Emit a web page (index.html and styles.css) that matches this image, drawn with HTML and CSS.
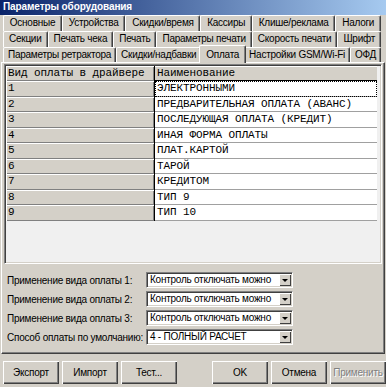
FILE: index.html
```html
<!DOCTYPE html>
<html lang="ru">
<head>
  <meta charset="UTF-8" />
  <title>Параметры оборудования</title>
  <link rel="stylesheet" href="styles.css">
</head>
<body>
  <div class="window">
    <div class="titlebar">Параметры оборудования</div>

    <div class="tabs">
      <div class="tabrow">
        <span class="tab">Основные</span>
        <span class="tab">Устройства</span>
        <span class="tab">Скидки/время</span>
        <span class="tab">Кассиры</span>
        <span class="tab">Клише/реклама</span>
        <span class="tab">Налоги</span>
      </div>
      <div class="tabrow">
        <span class="tab">Секции</span>
        <span class="tab">Печать чека</span>
        <span class="tab">Печать</span>
        <span class="tab">Параметры печати</span>
        <span class="tab">Скорость печати</span>
        <span class="tab">Шрифт</span>
      </div>
      <div class="tabrow last">
        <span class="tab">Параметры ретрактора</span>
        <span class="tab">Скидки/надбавки</span>
        <span class="tab active">Оплата</span>
        <span class="tab">Настройки GSM/Wi-Fi</span>
        <span class="tab">ОФД</span>
      </div>
    </div>

    <div class="panel">
      <div class="grid">
        <div class="row head">
          <div class="c1">Вид оплаты в драйвере</div>
          <div class="c2">Наименование</div>
        </div>
        <div class="row">
          <div class="c1">1</div>
          <div class="c2 focus">ЭЛЕКТРОННЫМИ</div>
        </div>
        <div class="row">
          <div class="c1">2</div>
          <div class="c2">ПРЕДВАРИТЕЛЬНАЯ ОПЛАТА (АВАНС)</div>
        </div>
        <div class="row">
          <div class="c1">3</div>
          <div class="c2">ПОСЛЕДУЮЩАЯ ОПЛАТА (КРЕДИТ)</div>
        </div>
        <div class="row">
          <div class="c1">4</div>
          <div class="c2">ИНАЯ ФОРМА ОПЛАТЫ</div>
        </div>
        <div class="row">
          <div class="c1">5</div>
          <div class="c2">ПЛАТ.КАРТОЙ</div>
        </div>
        <div class="row">
          <div class="c1">6</div>
          <div class="c2">ТАРОЙ</div>
        </div>
        <div class="row">
          <div class="c1">7</div>
          <div class="c2">КРЕДИТОМ</div>
        </div>
        <div class="row">
          <div class="c1">8</div>
          <div class="c2">ТИП 9</div>
        </div>
        <div class="row">
          <div class="c1">9</div>
          <div class="c2">ТИП 10</div>
        </div>
      </div>

      <div class="form">
        <label>Применение вида оплаты 1:</label>
        <div class="combo"><span>Контроль отключать можно</span><i class="drop"></i></div>
        <label>Применение вида оплаты 2:</label>
        <div class="combo"><span>Контроль отключать можно</span><i class="drop"></i></div>
        <label>Применение вида оплаты 3:</label>
        <div class="combo"><span>Контроль отключать можно</span><i class="drop"></i></div>
        <label>Способ оплаты по умолчанию:</label>
        <div class="combo"><span>4 - ПОЛНЫЙ РАСЧЕТ</span><i class="drop"></i></div>
      </div>
    </div>

    <div class="buttons">
      <div class="group">
        <button>Экспорт</button>
        <button>Импорт</button>
        <button>Тест...</button>
      </div>
      <div class="group">
        <button>OK</button>
        <button>Отмена</button>
        <button class="disabled">Применить</button>
      </div>
    </div>
  </div>
</body>
</html>
```

FILE: styles.css
```css
body {
  margin: 0;
  background: #d4d0c8;
  font-family: "Liberation Sans", Arial, sans-serif;
  font-size: 10px;
  letter-spacing: -0.25px;
  color: #000;
}
.window {
  width: 386px;
  height: 387px;
  display: flex;
  flex-direction: column;
  overflow: hidden;
}
.titlebar {
  height: 15px;
  line-height: 14px;
  padding-left: 3px;
  background: linear-gradient(to right, #0a246a, #a6caf0);
  color: #fff;
  font-weight: bold;
  letter-spacing: -0.1px;
}

/* tabs */
.tabs {
  padding: 0 5px 0 3px;
}
.tabrow {
  display: flex;
  height: 16px;
}
.tabrow.last {
  height: 15px;
}
.tab {
  flex: 1 1 auto;
  padding: 0 3px;
  text-align: center;
  white-space: nowrap;
  line-height: 14px;
  border-top: 1px solid #fff;
  border-left: 1px solid #fff;
  border-right: 1px solid #404040;
  border-radius: 2px 2px 0 0;
  box-shadow: inset -1px 0 #808080;
}
.tab.active {
  position: relative;
  z-index: 1;
  margin: -2px -2px -1px;
  padding: 0 5px;
  line-height: 17px;
  background: #d4d0c8;
}

/* page panel */
.panel {
  height: 289px;
  margin: 0 1px;
  border-top: 1px solid #fff;
  border-left: 1px solid #fff;
  border-right: 1px solid #404040;
  border-bottom: 1px solid #404040;
  box-shadow: inset -1px -1px #808080;
  padding: 1px 2px 0 2px;
}

/* payment grid */
.grid {
  height: 197px;
  background: #f0f0f0;
  border-top: 1px solid #808080;
  border-left: 1px solid #808080;
  border-right: 1px solid #fff;
  border-bottom: 1px solid #fff;
  box-shadow: inset 1px 1px #404040, inset -1px -1px #d4d0c8;
  padding: 1px 4px 0 1px;
  font-family: "Liberation Mono", "Courier New", monospace;
  font-size: 11px;
  letter-spacing: -0.1px;
}
.row {
  display: flex;
  height: 15.5px;
  line-height: 15px;
}
.row.head {
  height: 15px;
}
.c1 {
  width: 146px;
  padding-left: 2px;
  background: #d4d0c8;
  border-right: 1px solid #000;
  box-shadow: inset 1px 1px #fff, inset -1px -1px #808080;
}
.c2 {
  flex: 1;
  padding-left: 2px;
  background: #fff;
  border-bottom: 1px solid #a0a0a0;
  white-space: nowrap;
}
.head .c2 {
  background: #d4d0c8;
  border-bottom: 1px solid #000;
  box-shadow: inset 0 1px #fff;
}
.c2.focus {
  outline: 1px dotted #000;
  outline-offset: -1px;
}

/* combo boxes */
.form {
  display: grid;
  grid-template-columns: 139px 147px;
  grid-auto-rows: 16px;
  row-gap: 3px;
  margin-top: 8px;
  padding-left: 3px;
  align-items: center;
}
.form label {
  white-space: nowrap;
}
.combo {
  display: flex;
  height: 16px;
  box-sizing: border-box;
  background: #fff;
  border-top: 1px solid #808080;
  border-left: 1px solid #808080;
  border-right: 1px solid #fff;
  border-bottom: 1px solid #fff;
  box-shadow: inset 1px 1px #404040, inset -1px -1px #d4d0c8;
}
.combo span {
  flex: 1;
  padding-left: 3px;
  line-height: 14px;
  white-space: nowrap;
  overflow: hidden;
}
.drop {
  width: 12px;
  margin: 1px 1px 1px 0;
  background: #d4d0c8;
  box-shadow: inset 1px 1px #fff, inset -1px -1px #404040;
  position: relative;
}
.drop::after {
  content: "";
  position: absolute;
  left: 3px;
  top: 5px;
  border-left: 3px solid transparent;
  border-right: 3px solid transparent;
  border-top: 3px solid #000;
}

/* bottom buttons */
.buttons {
  display: flex;
  justify-content: space-between;
  margin-top: 7px;
  padding: 0 0 0 3px;
}
.group {
  display: flex;
  gap: 3px;
}
button {
  width: 56px;
  height: 23px;
  padding: 0;
  font-family: "Liberation Sans", Arial, sans-serif;
  font-size: 10px;
  letter-spacing: -0.25px;
  color: #000;
  background: #d4d0c8;
  border: none;
  box-shadow: inset 1px 1px #fff, inset -1px -1px #404040, inset -2px -2px #808080;
}
button.disabled {
  color: #808080;
  text-shadow: 1px 1px #fff;
}
```
